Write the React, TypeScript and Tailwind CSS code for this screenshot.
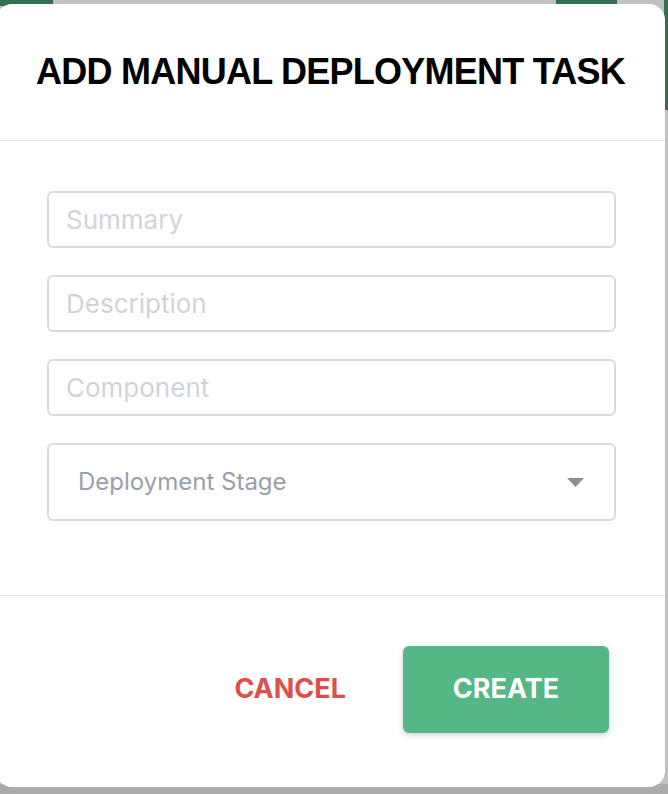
import React from "react";

const fields = ["Summary", "Description", "Component"];

export default function App() {
  return (
    <div className="relative h-[794px] w-[668px] overflow-hidden bg-[#c1c1c1]">
      {/* page behind the overlay */}
      <div className="absolute left-0 top-0 h-[6px] w-[53px] bg-[#356f52]" />
      <div className="absolute left-[556px] top-0 h-[6px] w-[61px] bg-[#356f52]" />
      <div className="absolute right-0 top-0 h-[110px] w-[4px] bg-[#356f52]" />
      <div className="absolute bottom-0 left-0 h-[10px] w-full bg-[#ababab]" />

      <div
        className="absolute left-[-4px] top-[4px] flex h-[783px] w-[669px] flex-col rounded-2xl bg-white"
        style={{ fontFamily: "Inter, 'Liberation Sans', sans-serif" }}
      >
        <div className="flex h-[137px] shrink-0 items-center justify-center border-b border-[#e4e4ea]">
          <h2
            className="text-[36px] font-bold tracking-[-0.75px] text-black"
            style={{ fontFamily: "'Liberation Sans', Arial, sans-serif" }}
          >
            ADD MANUAL DEPLOYMENT TASK
          </h2>
        </div>

        <div className="flex flex-col gap-[27px] border-b border-[#e4e4ea] pb-[74px] pl-[51px] pr-[49px] pt-[50px]">
          {fields.map((f) => (
            <input
              key={f}
              placeholder={f}
              className="h-[57px] w-full rounded-md border-2 border-[#d8dadf] px-[17px] text-[26px] text-gray-700 outline-none placeholder:text-[#d0d3d9]"
            />
          ))}
          <div className="flex h-[78px] w-full items-center justify-between rounded-md border-2 border-[#d8dadf] pl-[29px] pr-[30px]">
            <span className="text-[24px] text-[#9aa0ab]">Deployment Stage</span>
            <svg width="17" height="9" viewBox="0 0 17 9">
              <path d="M0 0h17l-8.5 9z" fill="#8e8e8e" />
            </svg>
          </div>
        </div>

        <div className="flex flex-1 items-center justify-end gap-[57px] pb-[4px] pr-[56px]">
          <button className="text-[27px] font-bold text-[#df4f4a]">CANCEL</button>
          <button className="h-[87px] w-[206px] rounded-md bg-[#55b786] text-[27px] font-bold text-white shadow-[0_2px_6px_rgba(0,0,0,0.18)]">
            CREATE
          </button>
        </div>
      </div>
    </div>
  );
}
